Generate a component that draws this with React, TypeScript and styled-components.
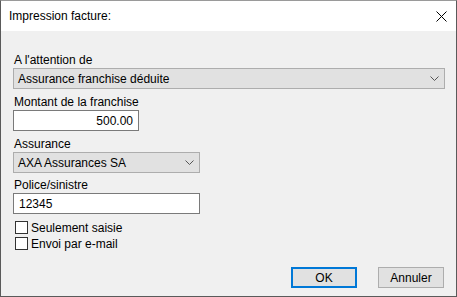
import React from "react";
import styled, { createGlobalStyle } from "styled-components";

const GlobalStyle = createGlobalStyle`
  html, body {
    margin: 0;
    padding: 0;
    background: #f0f0f0;
  }
  body {
    font-family: "Liberation Sans", Arial, sans-serif;
    font-size: 12px;
    color: #000;
  }
`;

const Window = styled.div`
  display: flex;
  flex-direction: column;
  box-sizing: border-box;
  width: 457px;
  height: 297px;
  border: 1px solid #5a5a5a;
  border-top-color: #9a9a9a;
  background: #f0f0f0;
`;

const TitleBar = styled.div`
  display: flex;
  align-items: center;
  justify-content: space-between;
  height: 30px;
  padding: 0 5px 0 8px;
  background: #fff;
  font-size: 12px;
`;

const CloseButton = styled.div`
  display: flex;
  align-items: center;
  justify-content: center;
  width: 20px;
  height: 20px;
`;

const Body = styled.div`
  flex: 1;
  display: flex;
  flex-direction: column;
  padding: 21px 11px 8px 12px;
`;

const Label = styled.div`
  height: 16px;
  line-height: 16px;
  padding-left: 1px;
`;

const Field = styled.div<{ $gap?: number }>`
  display: flex;
  flex-direction: column;
  margin-bottom: ${({ $gap }) => $gap ?? 5}px;
`;

const SelectBox = styled.div<{ $width?: number }>`
  display: flex;
  align-items: center;
  justify-content: space-between;
  box-sizing: border-box;
  width: ${({ $width }) => ($width ? `${$width}px` : "100%")};
  height: 21px;
  padding: 0 5px 0 4px;
  background: #e1e1e1;
  border: 1px solid #adadad;
`;

const TextInput = styled.div<{ $width: number; $align?: string }>`
  display: flex;
  align-items: center;
  justify-content: ${({ $align }) => ($align === "right" ? "flex-end" : "flex-start")};
  box-sizing: border-box;
  width: ${({ $width }) => $width}px;
  height: 21px;
  padding: 0 5px 0 5px;
  background: #fff;
  border: 1px solid #7a7a7a;
`;

const CheckList = styled.div`
  display: flex;
  flex-direction: column;
  gap: 3px;
  margin-top: 2px;
  padding-left: 2px;
`;

const CheckRow = styled.label`
  display: flex;
  align-items: center;
  gap: 3px;
  height: 13px;
`;

const Box = styled.span`
  box-sizing: border-box;
  width: 13px;
  height: 13px;
  background: #fff;
  border: 1px solid #333;
`;

const Footer = styled.div`
  display: flex;
  justify-content: flex-end;
  gap: 21px;
  margin-top: auto;
  padding-right: 1px;
`;

const Button = styled.div<{ $default?: boolean }>`
  display: flex;
  align-items: center;
  justify-content: center;
  box-sizing: border-box;
  width: 66px;
  height: 21px;
  background: #e1e1e1;
  border: ${({ $default }) => ($default ? "2px solid #0078d7" : "1px solid #adadad")};
`;

const Chevron = () => (
  <svg width="9" height="5" viewBox="0 0 9 5">
    <path d="M0.5 0.5 L4.5 4.5 L8.5 0.5" fill="none" stroke="#555" strokeWidth="1" />
  </svg>
);

const App: React.FC = () => {
  return (
    <>
      <GlobalStyle />
      <Window>
        <TitleBar>
          <span>Impression facture:</span>
          <CloseButton>
            <svg width="11" height="11" viewBox="0 0 11 11">
              <path d="M0.5 0.5 L10.5 10.5 M10.5 0.5 L0.5 10.5" stroke="#000" strokeWidth="1" />
            </svg>
          </CloseButton>
        </TitleBar>
        <Body>
          <Field>
            <Label>A l'attention de</Label>
            <SelectBox>
              <span>Assurance franchise déduite</span>
              <Chevron />
            </SelectBox>
          </Field>
          <Field>
            <Label>Montant de la franchise</Label>
            <TextInput $width={126} $align="right">
              500.00
            </TextInput>
          </Field>
          <Field $gap={4}>
            <Label>Assurance</Label>
            <SelectBox $width={187}>
              <span>AXA Assurances SA</span>
              <Chevron />
            </SelectBox>
          </Field>
          <Field>
            <Label>Police/sinistre</Label>
            <TextInput $width={187}>12345</TextInput>
          </Field>
          <CheckList>
            <CheckRow>
              <Box />
              Seulement saisie
            </CheckRow>
            <CheckRow>
              <Box />
              Envoi par e-mail
            </CheckRow>
          </CheckList>
          <Footer>
            <Button $default>OK</Button>
            <Button>Annuler</Button>
          </Footer>
        </Body>
      </Window>
    </>
  );
};

export default App;
